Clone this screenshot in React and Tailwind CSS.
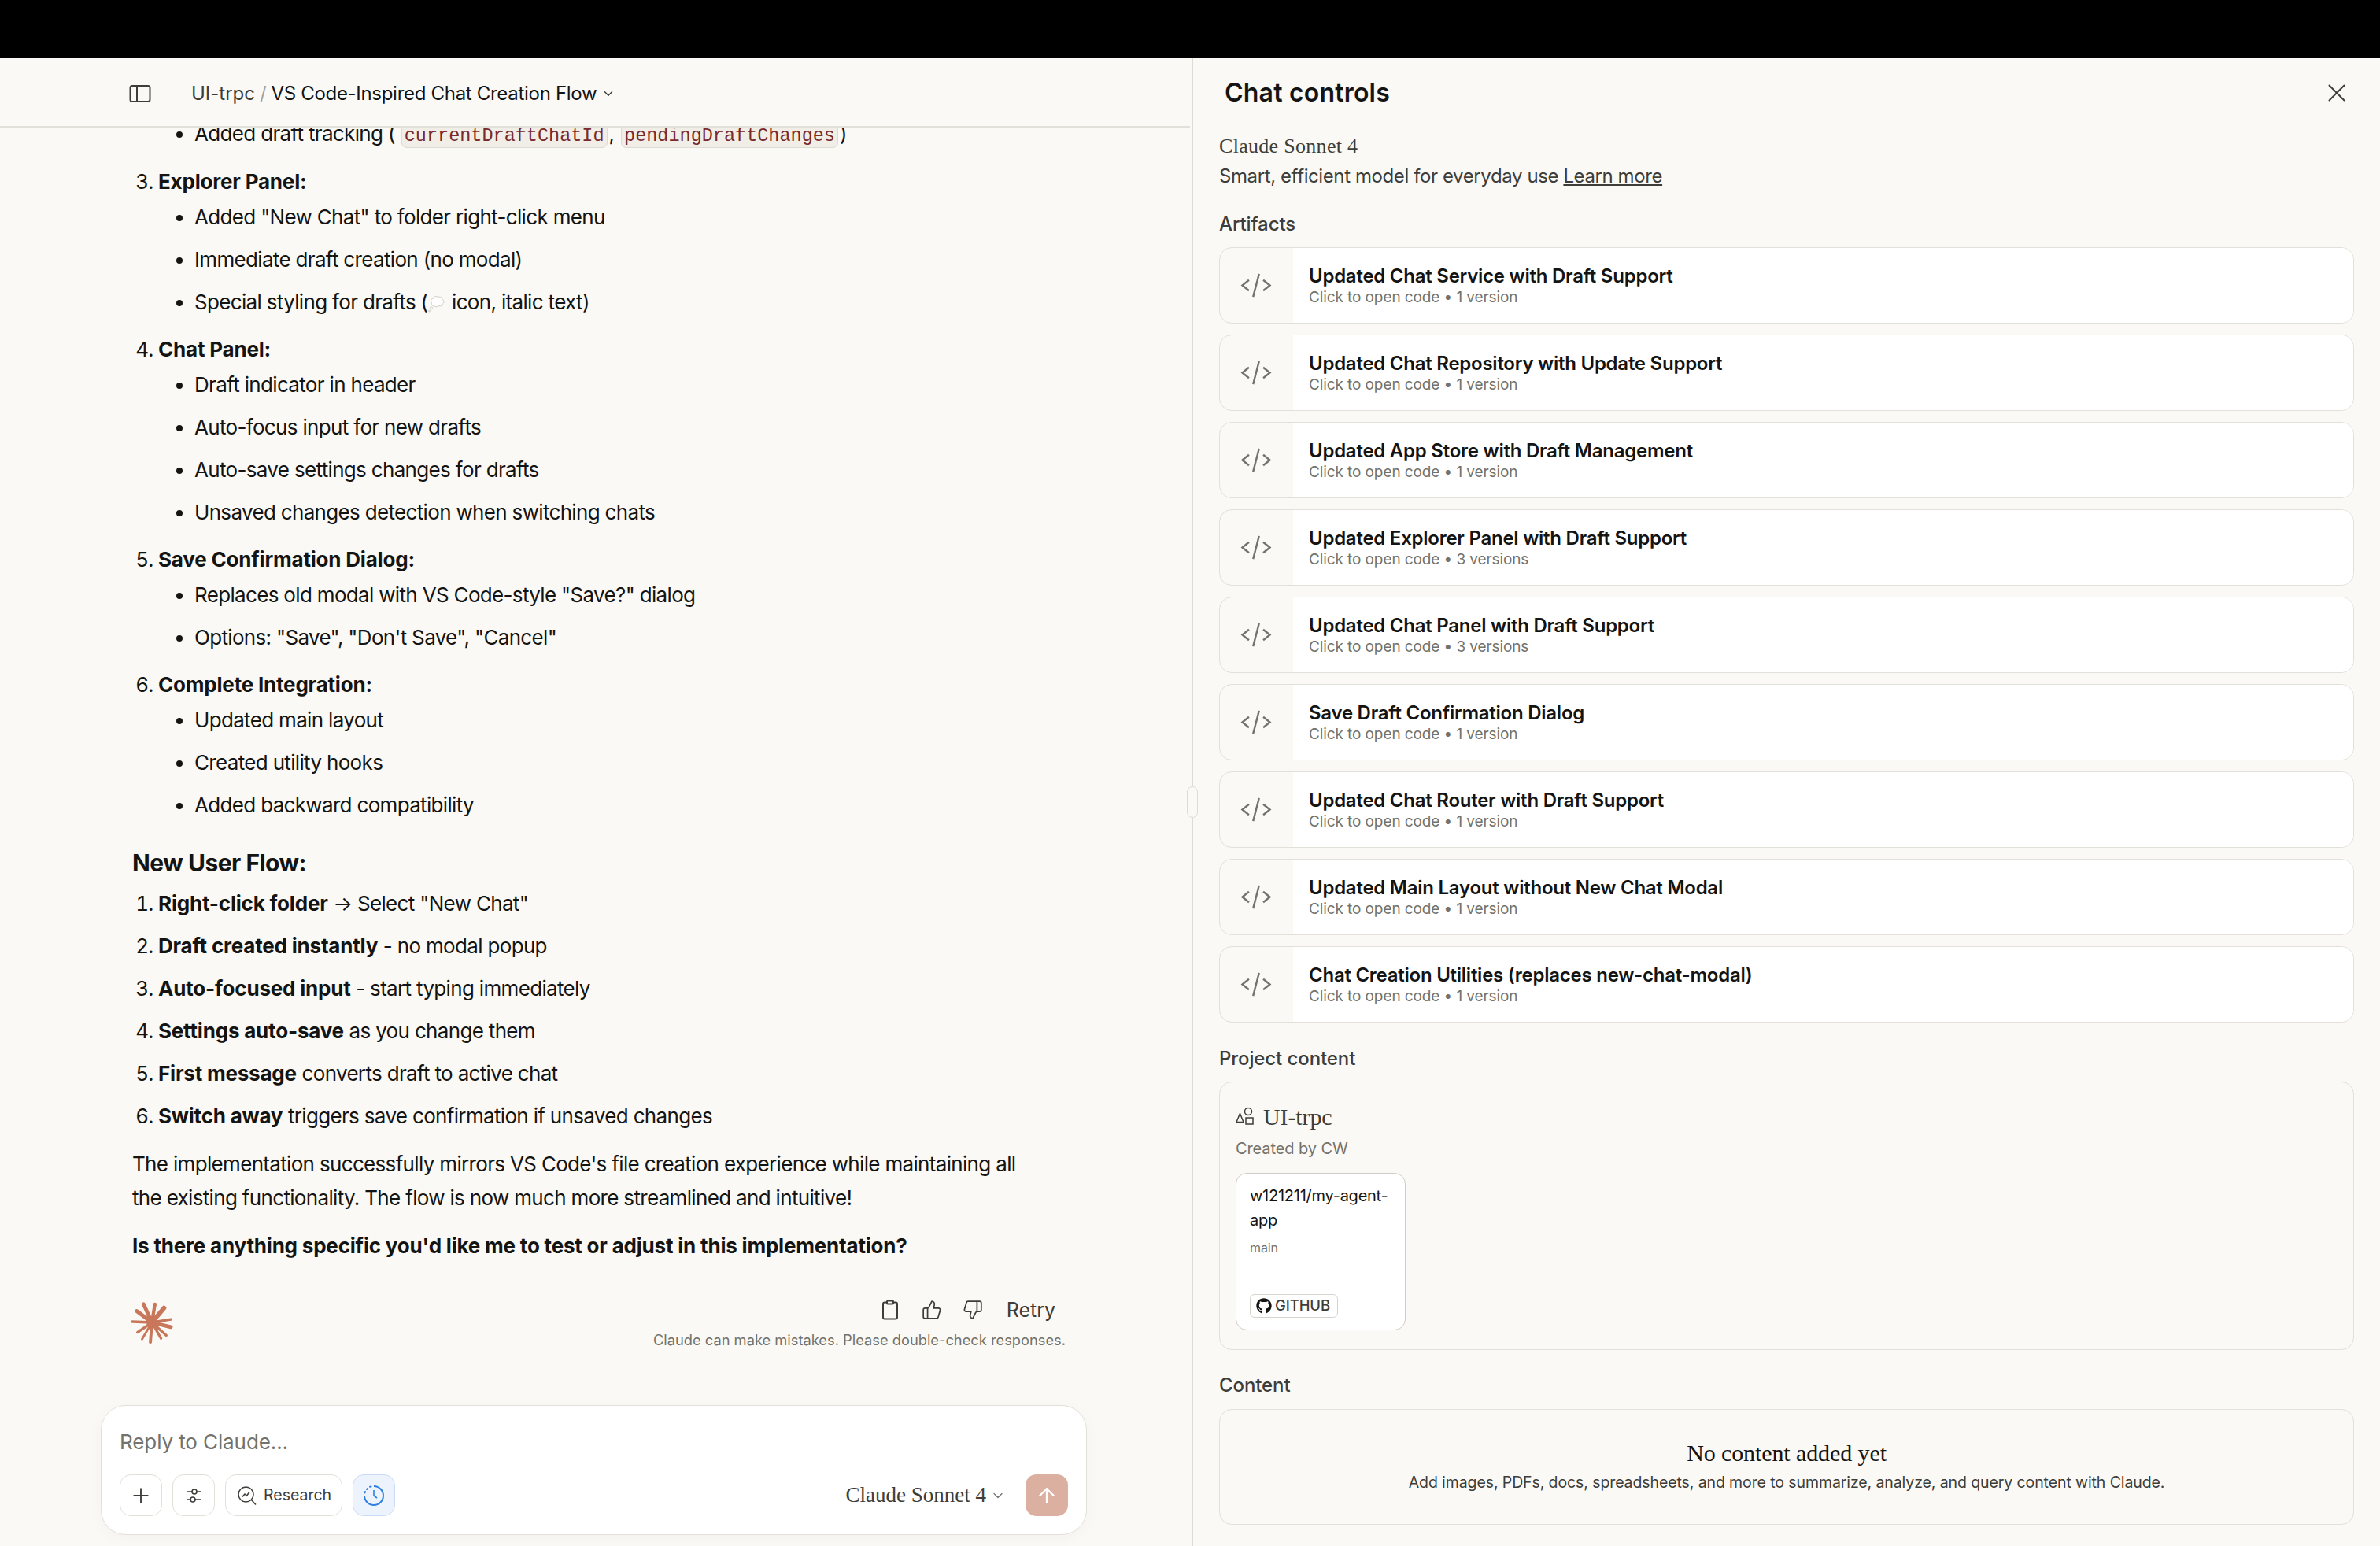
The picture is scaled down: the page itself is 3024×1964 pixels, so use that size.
import React from 'react';
import { ChevronDown, X, Plus, ThumbsUp, ThumbsDown, ArrowUp } from 'lucide-react';
import { FaGithub } from 'react-icons/fa';

const SANS = 'font-["Inter",sans-serif]';
const SERIF = 'font-["Liberation_Serif",serif]';

const artifacts = [
  ['Updated Chat Service with Draft Support', '1 version'],
  ['Updated Chat Repository with Update Support', '1 version'],
  ['Updated App Store with Draft Management', '1 version'],
  ['Updated Explorer Panel with Draft Support', '3 versions'],
  ['Updated Chat Panel with Draft Support', '3 versions'],
  ['Save Draft Confirmation Dialog', '1 version'],
  ['Updated Chat Router with Draft Support', '1 version'],
  ['Updated Main Layout without New Chat Modal', '1 version'],
  ['Chat Creation Utilities (replaces new-chat-modal)', '1 version'],
];

const flowSteps = [
  ['Right-click folder', ' → Select "New Chat"'],
  ['Draft created instantly', ' - no modal popup'],
  ['Auto-focused input', ' - start typing immediately'],
  ['Settings auto-save', ' as you change them'],
  ['First message', ' converts draft to active chat'],
  ['Switch away', ' triggers save confirmation if unsaved changes'],
];

const Code = ({ className = '', children }) => (
  <code className={`font-["Liberation_Mono",monospace] text-[23.5px] tracking-normal text-[#7a2a2a] bg-[#f0eee6] border border-[#dedbd2] rounded-[7px] mx-[2px] px-[3px] pb-[1px] ${className}`}>
    {children}
  </code>
);

const Bold = ({ children }) => (
  <strong className="font-bold tracking-[-0.2px]">{children}</strong>
);

const SubList = ({ items }) => (
  <ul className="list-disc pl-[46px] mt-[2px] flex flex-col gap-[11px]">
    {items.map((t, i) => <li key={i}>{t}</li>)}
  </ul>
);

const ThoughtBubble = () => (
  <svg width="24" height="26" viewBox="0 0 24 26" className="inline-block align-[-5px]">
    <g fill="#ffffff" stroke="#cfcdc6" strokeWidth="1">
      <circle cx="2.5" cy="23" r="1" />
      <circle cx="5" cy="19.5" r="1.6" />
      <path d="M9 17c-3 0-4.500-2.500-3.500-4.500C3.500 10.500 5 7 7.500 7.500 8 4.500 12 3.500 14 5.500c2.500-1 5 .5 5 3 2.500 1 2.500 4.500.5 5.500 0 2.500-3 3.500-5 2.500-1.500 1.500-4 1.500-5.500.5z" />
    </g>
  </svg>
);

const SidebarIcon = () => (
  <svg width="28" height="24" viewBox="0 0 28 24" fill="none" stroke="#3d3d3a" strokeWidth="2">
    <rect x="1.500" y="2" width="25" height="20" rx="2.500" />
    <path d="M10 2v20" />
  </svg>
);

const CodeIcon = () => (
  <svg width="40" height="32" viewBox="0 0 40 32" fill="none" stroke="#73726c" strokeWidth="2.400" strokeLinecap="square">
    <path d="M10 9.500 2.500 15.500 10 21.500" />
    <path d="M30 9.500 37.500 15.500 30 21.500" />
    <path d="M23.500 2 16.500 29" />
  </svg>
);

const ShapesIcon = () => (
  <svg width="24" height="24" viewBox="0 0 24 24" fill="none" stroke="#3d3d3a" strokeWidth="1.500">
    <path d="M5.500 8.500 10 19.500H1z" />
    <circle cx="16" cy="6" r="4.500" />
    <rect x="13" y="14" width="9" height="8" />
  </svg>
);

const ClipboardIcon = () => (
  <svg width="22" height="26" viewBox="0 0 22 26" fill="none" stroke="#3d3d3a" strokeWidth="2">
    <rect x="2" y="3.500" width="18" height="21" rx="2" />
    <rect x="7" y="1.500" width="8" height="4" rx="1" fill="#faf9f5" />
  </svg>
);

const SlidersIcon = () => (
  <svg width="24" height="24" viewBox="0 0 24 24" fill="none" stroke="#3d3d3a" strokeWidth="1.600">
    <path d="M3 7h7M16 7h5M3 17h5M14 17h7" />
    <circle cx="13" cy="7" r="3" />
    <circle cx="11" cy="17" r="3" />
  </svg>
);

const ResearchIcon = () => (
  <svg width="26" height="26" viewBox="0 0 26 26" fill="none" stroke="#3d3d3a" strokeWidth="1.600">
    <circle cx="11.500" cy="11.500" r="9.500" />
    <path d="M18.500 18.500 24 24.500" />
    <path d="M7 14.500l3-3.500 2.500 2 3.500-4.500" />
  </svg>
);

const ClockIcon = () => (
  <svg width="28" height="28" viewBox="0 0 28 28" fill="none" stroke="#2f7fe0" strokeWidth="2">
    <path d="M14 2a12 12 0 1 1-12 12" />
    <path d="M2.500 10.500l.5-1.500M5 6l1-1M9 2.800l1.500-.4" strokeLinecap="round" />
    <path d="M14 7v7l4 3" strokeWidth="1.600" />
  </svg>
);

const Spark = () => (
  <svg width="54" height="54" viewBox="-28 -28 56 56" stroke="#c8775a" strokeLinecap="round" fill="#c8775a">
    <path d="M0 0-11-24" strokeWidth="5" />
    <path d="M0 0 4-24" strokeWidth="4.500" />
    <path d="M0 0 16-19" strokeWidth="6" />
    <path d="M0 0 25-4" strokeWidth="3.500" />
    <path d="M0 0 25 6" strokeWidth="5" />
    <path d="M0 0 19 17" strokeWidth="3.500" />
    <path d="M0 0 12 21" strokeWidth="3.500" />
    <path d="M0 0-2 26" strokeWidth="4" />
    <path d="M0 0-13 22" strokeWidth="3" />
    <path d="M0 0-19 13" strokeWidth="3.500" />
    <path d="M0 0-26-1" strokeWidth="3.500" />
    <path d="M0 0-20-15" strokeWidth="5" />
    <circle r="7" stroke="none" />
  </svg>
);

const Chat = () => (
  <div className="flex-1 overflow-hidden">
    <div className={`${SANS} -mt-[14px] pl-[168px] pr-[190px] text-[26px] leading-[43px] tracking-[-0.67px] text-[#141413]`}>
      <ol className="list-decimal pl-[33px]" start={2}>
        <li className="list-none">
          <ul className="list-disc pl-[46px]">
            <li>Added draft tracking (<Code className="ml-[8px]">currentDraftChatId</Code>, <Code>pendingDraftChanges</Code>)</li>
          </ul>
        </li>
      </ol>
      <ol className="list-decimal pl-[33px] mt-[15px] flex flex-col gap-[17px]" start={3}>
        <li>
          <Bold>Explorer Panel:</Bold>
          <SubList items={['Added "New Chat" to folder right-click menu', 'Immediate draft creation (no modal)', <>Special styling for drafts (<ThoughtBubble /> icon, italic text)</>]} />
        </li>
        <li>
          <Bold>Chat Panel:</Bold>
          <SubList items={['Draft indicator in header', 'Auto-focus input for new drafts', 'Auto-save settings changes for drafts', 'Unsaved changes detection when switching chats']} />
        </li>
        <li>
          <Bold>Save Confirmation Dialog:</Bold>
          <SubList items={['Replaces old modal with VS Code-style "Save?" dialog', 'Options: "Save", "Don\'t Save", "Cancel"']} />
        </li>
        <li>
          <Bold>Complete Integration:</Bold>
          <SubList items={['Updated main layout', 'Created utility hooks', 'Added backward compatibility']} />
        </li>
      </ol>
      <h2 className="text-[30px] leading-[46px] font-bold tracking-[-0.5px] mt-[29px]">New User Flow:</h2>
      <ol className="list-decimal pl-[33px] mt-[7px] flex flex-col gap-[11px]">
        {flowSteps.map(([b, rest]) => (
          <li key={b}><Bold>{b}</Bold>{rest}</li>
        ))}
      </ol>
      <p className="mt-[18px]">The implementation successfully mirrors VS Code's file creation experience while maintaining all the existing functionality. The flow is now much more streamlined and intuitive!</p>
      <p className="mt-[18px]"><Bold>Is there anything specific you'd like me to test or adjust in this implementation?</Bold></p>

      <div className="flex items-start justify-between mt-[44px] -mr-[29px]">
        <div className="mt-[5px] -ml-[2px]"><Spark /></div>
        <div className="flex flex-col items-end">
          <div className="flex items-center gap-[30px] h-[32px] text-[#3d3d3a]">
            <ClipboardIcon />
            <ThumbsUp size={26} strokeWidth={1.600} className="-ml-[1px]" />
            <ThumbsDown size={26} strokeWidth={1.600} className="-ml-[4px]" />
            <span className="text-[25px] tracking-normal mr-[13px]">Retry</span>
          </div>
          <div className="text-[18.3px] leading-[28px] tracking-normal text-[#73726c] mt-[8px]">Claude can make mistakes. Please double-check responses.</div>
        </div>
      </div>
    </div>
  </div>
);

const Composer = () => (
  <div className={`${SANS} ml-[128px] mb-[14px] w-[1253px] h-[165px] shrink-0 bg-white border border-[#e2e0d9] rounded-[32px] px-[23px] pt-[28px] shadow-[0_4px_20px_rgba(0,0,0,0.03)]`}>
    <div className="text-[26px] leading-[36px] tracking-[-0.1px] text-[#73726c]">Reply to Claude...</div>
    <div className="flex items-center mt-[23px] h-[53px]">
      <div className="flex items-center justify-center w-[54px] h-[53px] border border-[#e2e0d9] rounded-[14px] text-[#3d3d3a]"><Plus size={30} strokeWidth={1.500} /></div>
      <div className="flex items-center justify-center w-[54px] h-[53px] ml-[13px] border border-[#e2e0d9] rounded-[14px]"><SlidersIcon /></div>
      <div className="flex items-center gap-[8px] w-[149px] h-[53px] ml-[13px] pl-[14px] border border-[#e2e0d9] rounded-[14px] text-[19.5px] text-[#3d3d3a]"><ResearchIcon />Research</div>
      <div className="flex items-center justify-center w-[54px] h-[53px] ml-[13px] bg-[#edf3fc] border border-[#c9dcf5] rounded-[14px]"><ClockIcon /></div>
      <div className={`${SERIF} ml-auto flex items-center text-[27px] text-[#3d3d3a]`}>
        Claude Sonnet 4<ChevronDown size={20} strokeWidth={1.500} className="ml-[5px] text-[#73726c]" />
      </div>
      <div className="flex items-center justify-center w-[54px] h-[53px] ml-[25px] bg-[#dcb0a1] rounded-[14px] text-white"><ArrowUp size={30} strokeWidth={1.800} /></div>
    </div>
  </div>
);

const SectionLabel = ({ className, children }) => (
  <div className={`text-[24px] leading-[30px] font-medium text-[#3d3d3a] ${className}`}>{children}</div>
);

const ArtifactCard = ({ title, versions }) => (
  <div className="flex h-[97px] border border-[#e2e0d9] rounded-[16px] overflow-hidden">
    <div className="w-[93px] shrink-0 flex items-center justify-center pr-[2px]"><CodeIcon /></div>
    <div className="flex-1 bg-white pl-[20px] pt-[20px]">
      <div className="text-[24px] leading-[32px] font-semibold tracking-[-0.25px] text-[#141413]">{title}</div>
      <div className="text-[19px] leading-[24px] -mt-[1px] text-[#73726c]">Click to open code • {versions}</div>
    </div>
  </div>
);

const Controls = () => (
  <div className={`${SANS} flex-1 relative pl-[33px] pr-[33px] tracking-[-0.1px]`}>
    <div className="h-[88px] flex items-center justify-between pl-[7px] pr-[3px]">
      <div className="text-[32px] font-semibold tracking-[0.2px] text-[#141413]">Chat controls</div>
      <X size={38} strokeWidth={1.200} className="text-[#3d3d3a]" />
    </div>
    <div className={`${SERIF} mt-[9px] text-[26px] tracking-[0.3px] leading-[30px] text-[#3d3d3a]`}>Claude Sonnet 4</div>
    <div className="mt-[8px] text-[24px] leading-[30px] tracking-[-0.4px] text-[#3d3d3a]">
      Smart, efficient model for everyday use <span className="underline">Learn more</span>
    </div>
    <SectionLabel className="mt-[31px]">Artifacts</SectionLabel>
    <div className="mt-[14px] flex flex-col gap-[14px]">
      {artifacts.map(([title, versions]) => <ArtifactCard key={title} title={title} versions={versions} />)}
    </div>
    <SectionLabel className="mt-[31px]">Project content</SectionLabel>
    <div className="mt-[14px] h-[341px] border border-[#e2e0d9] rounded-[16px] pl-[20px] pt-[25px]">
      <div className="flex items-center gap-[11px] h-[36px] text-[#3d3d3a]">
        <ShapesIcon />
        <span className={`${SERIF} text-[30px]`}>UI-trpc</span>
      </div>
      <div className="text-[20px] leading-[28px] text-[#73726c] mt-[9px]">Created by CW</div>
      <div className="mt-[17px] w-[216px] h-[200px] bg-white border border-[#cfcdc6] rounded-[14px] px-[17px] pt-[13px]">
        <div className="text-[20px] leading-[31px] tracking-[-0.25px] text-[#141413]">w121211/my-agent-app</div>
        <div className="text-[16px] leading-[24px] text-[#73726c] mt-[7px]">main</div>
        <div className="mt-[47px] flex items-center gap-[4px] w-[112px] h-[30px] bg-white border border-[#d6d4cd] rounded-[6px] pl-[7px] text-[18.5px] font-medium text-[#3d3d3a]">
          <FaGithub size={20} className="text-[#141413]" />GITHUB
        </div>
      </div>
    </div>
    <SectionLabel className="mt-[30px]">Content</SectionLabel>
    <div className="mt-[15px] h-[147px] border border-[#e2e0d9] rounded-[16px] flex flex-col items-center pt-[37px]">
      <div className={`${SERIF} text-[30px] leading-[36px] text-[#141413]`}>No content added yet</div>
      <div className="text-[19.5px] leading-[28px] text-[#3d3d3a] mt-[5px]">Add images, PDFs, docs, spreadsheets, and more to summarize, analyze, and query content with Claude.</div>
    </div>
  </div>
);

export default function App() {
  return (
    <div className="w-[3024px] h-[1964px] flex flex-col overflow-hidden bg-[#faf9f5]">
      <div className="h-[74px] shrink-0 bg-black" />
      <div className="flex-1 flex min-h-0">
        <div className="w-[1516px] shrink-0 flex flex-col relative border-r border-[#dedcd5]">
          <div className={`${SANS} h-[88px] shrink-0 flex items-center pl-[164px] pt-[4px] border-b-2 border-[#e2e0d9] mr-[3px] text-[24px] tracking-[-0.3px]`}>
            <SidebarIcon />
            <span className="ml-[51px] tracking-normal text-[#3d3d3a]">UI-trpc</span>
            <span className="mx-[6px] text-[#a3a29b]">/</span>
            <span className="text-[#141413]">VS Code-Inspired Chat Creation Flow</span>
            <ChevronDown size={18} strokeWidth={2} className="ml-[6px] text-[#3d3d3a]" />
          </div>
          <Chat />
          <Composer />
          <div className="absolute left-[1508px] top-[925px] w-[14px] h-[40px] rounded-full bg-[#faf9f5] border border-[#dedcd5]" />
        </div>
        <Controls />
      </div>
    </div>
  );
}
